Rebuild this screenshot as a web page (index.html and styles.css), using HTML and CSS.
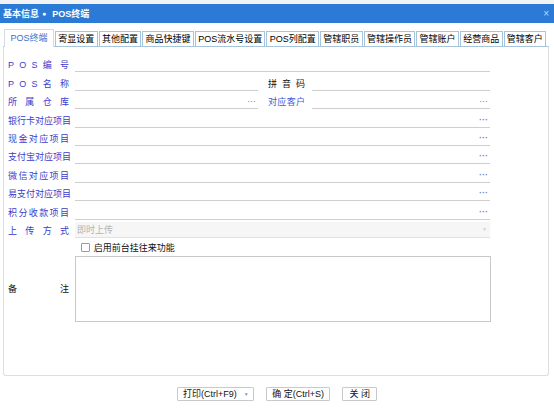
FILE: index.html
```html
<!DOCTYPE html>
<html lang="zh">
<head>
<meta charset="utf-8">
<title>POS终端</title>
<link rel="stylesheet" href="styles.css">
</head>
<body>
<div class="topstrip"></div>
<div class="titlebar">
  <span class="title">基本信息<span class="dot">●</span>POS终端</span>
  <span class="close">×</span>
</div>
<div class="tabs">
  <div class="tab active">POS终端</div>
  <div class="tab">寄显设置</div>
  <div class="tab">其他配置</div>
  <div class="tab">商品快捷键</div>
  <div class="tab">POS流水号设置</div>
  <div class="tab">POS列配置</div>
  <div class="tab">管辖职员</div>
  <div class="tab">管辖操作员</div>
  <div class="tab">管辖账户</div>
  <div class="tab">经营商品</div>
  <div class="tab">管辖客户</div>
</div>
<div class="panel">
  <div class="form">
    <div class="row">
      <span class="lbl">P O S 编 号</span>
      <div class="field full"></div>
    </div>
    <div class="row">
      <span class="lbl">P O S 名 称</span>
      <div class="field half"></div>
      <span class="lbl2 black">拼 音 码</span>
      <div class="field rhalf"></div>
    </div>
    <div class="row">
      <span class="lbl">所 属 仓 库</span>
      <div class="field half"><span class="dots thin">···</span></div>
      <span class="lbl2 light">对应客户</span>
      <div class="field rhalf"><span class="dots thin">···</span></div>
    </div>
    <div class="row">
      <span class="lbl">银行卡对应项目</span>
      <div class="field full"><span class="dots">···</span></div>
    </div>
    <div class="row">
      <span class="lbl">现金对应项目</span>
      <div class="field full"><span class="dots">···</span></div>
    </div>
    <div class="row">
      <span class="lbl">支付宝对应项目</span>
      <div class="field full"><span class="dots">···</span></div>
    </div>
    <div class="row">
      <span class="lbl">微信对应项目</span>
      <div class="field full"><span class="dots">···</span></div>
    </div>
    <div class="row">
      <span class="lbl">易支付对应项目</span>
      <div class="field full"><span class="dots">···</span></div>
    </div>
    <div class="row">
      <span class="lbl">积分收款项目</span>
      <div class="field full"><span class="dots">···</span></div>
    </div>
    <div class="row">
      <span class="lbl">上 传 方 式</span>
      <div class="select"><span class="seltext">即时上传</span><span class="arrow">▼</span></div>
    </div>
    <div class="checkrow">
      <span class="box"></span><span class="checklabel">启用前台挂往来功能</span>
    </div>
    <div class="memorow">
      <span class="lbl black">备 注</span>
      <div class="memo"></div>
    </div>
  </div>
</div>
<div class="buttons">
  <div class="btn print">打印(Ctrl+F9)<span class="caret">▼</span></div>
  <div class="btn ok">确 定(Ctrl+S)</div>
  <div class="btn close-btn">关 闭</div>
</div>
</body>
</html>
```
FILE: styles.css
```css
* { box-sizing: border-box; }
html, body { margin: 0; padding: 0; }
body {
  width: 554px;
  height: 414px;
  overflow: hidden;
  background: #fff;
  color: #000;
  font-family: "Liberation Sans", "Noto Sans CJK SC", sans-serif;
  font-size: 9px;
}
.topstrip { height: 4px; background: #f1f3f6; }
.titlebar {
  height: 19px;
  background: #2b7bd6;
  color: #fff;
  display: flex;
  align-items: center;
  justify-content: space-between;
  padding: 0 5px 0 3px;
  font-weight: bold;
}
.title { display: flex; align-items: center; }
.title .dot { font-size: 7px; margin: 0 6px 0 3px; }
.close { color: #c6d8f0; font-size: 10px; font-weight: normal; }

.tabs {
  display: flex;
  align-items: flex-end;
  height: 23px;
  padding-left: 4px;
  gap: 1px;
}
.tab {
  height: 15px;
  line-height: 14px;
  padding: 0 2.3px;
  border: 1px solid #a6c4dc;
  border-bottom: none;
  background: #fff;
  white-space: nowrap;
  text-align: center;
}
.tab.active {
  height: 18px;
  line-height: 17px;
  margin-bottom: -1px;
  padding: 0 5.5px;
  border-color: #d3dbe3;
  color: #3c6fcc;
  position: relative;
  z-index: 1;
}

.panel {
  margin: 0 5px 0 3px;
  height: 330px;
  border: 1px solid #dedede;
  border-top-color: #a6c4dc;
  border-radius: 0 0 3px 3px;
  padding: 8px 0 0 4px;
}
.row {
  height: 18.4px;
  display: flex;
  align-items: flex-end;
}
.lbl {
  width: 61px;
  flex: none;
  text-align: justify;
  text-align-last: justify;
  color: #3b3bcc;
  line-height: 12px;
  padding-bottom: 2px;
  white-space: nowrap;
}
.lbl2 {
  width: 37px;
  flex: none;
  margin-left: 10px;
  text-align: justify;
  text-align-last: justify;
  line-height: 12px;
  padding-bottom: 2px;
  white-space: nowrap;
}
.black { color: #111; }
.light { color: #3a5be0; }
.field {
  height: 14px;
  margin-left: 6px;
  margin-bottom: 1px;
  border-bottom: 1px solid #cfcfcf;
  display: flex;
  justify-content: flex-end;
  align-items: center;
  padding-right: 2px;
  flex: none;
}
.lbl2 + .field { margin-left: 7px; }
.full { width: 415px; }
.half { width: 183px; }
.rhalf { width: 178px; }
.dots {
  color: #6b90d2;
  font-size: 9px;
  font-weight: bold;
  letter-spacing: 0;
  line-height: 9px;
}
.dots.thin { font-weight: normal; color: #5a7fcc; }

.select {
  width: 415px;
  height: 15.5px;
  margin-left: 6px;
  margin-bottom: 1.3px;
  background: #f6f6f6;
  border-bottom: 1px solid #e2e2e2;
  display: flex;
  align-items: center;
  justify-content: space-between;
  padding: 0 3px 0 2px;
}
.seltext { color: #b4b4b4; }
.arrow { color: #ccd3dc; font-size: 5px; }

.checkrow {
  height: 17px;
  display: flex;
  align-items: center;
  padding-left: 72.7px;
}
.box {
  width: 9px;
  height: 9px;
  border: 1px solid #9a9a9a;
  border-radius: 1px;
  background: #fff;
}
.checklabel { margin-left: 4px; color: #111; }

.memorow {
  height: 66px;
  display: flex;
  align-items: center;
}
.memorow .lbl { padding-bottom: 0; }
.memo {
  width: 416px;
  height: 66px;
  margin-left: 6px;
  border: 1px solid #c9c9c9;
}

.buttons {
  margin-top: 11px;
  display: flex;
  justify-content: center;
  gap: 12px;
}
.btn {
  height: 14px;
  line-height: 12px;
  border: 1px solid #c9c9c9;
  border-radius: 1px;
  background: #fff;
  padding: 0 5.5px;
  white-space: nowrap;
  color: #111;
  display: flex;
  align-items: center;
}
.btn.print { padding: 0 4px 0 5px; }
.caret { color: #7b9fd6; font-size: 5px; margin-left: 7px; }
.btn.close-btn { padding: 0 6px; }
```
